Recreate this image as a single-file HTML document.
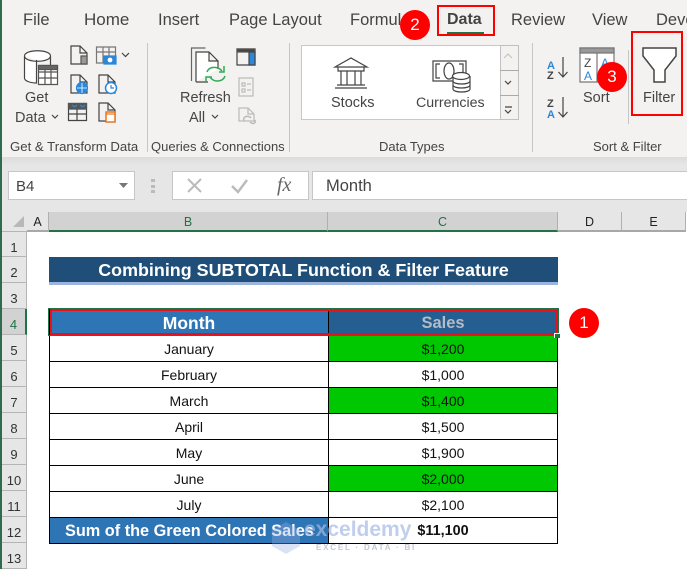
<!DOCTYPE html>
<html><head><meta charset="utf-8"><style>
html,body{margin:0;padding:0}
body{width:687px;height:569px;overflow:hidden;background:#fff;position:relative;font-family:"Liberation Sans",sans-serif}
div,span.a{position:absolute;box-sizing:border-box}
.t{white-space:nowrap;color:#444;font-size:14.5px;line-height:18px}
.tab{white-space:nowrap;color:#444;font-size:16.5px;line-height:20px;top:10px}
.g{white-space:nowrap;color:#444;font-size:13px;line-height:16px;top:139px;text-align:center}
.sep{background:#c6c6c6;width:1px;top:43px;height:109px}
.rh{left:2px;width:25px;height:26px;background:#e6e6e6;border-bottom:1px solid #b5b5b5;border-right:1px solid #b5b5b5;color:#333;font-size:13px;text-align:center;line-height:32px}
.ch{top:212px;height:20px;background:#e6e6e6;border-right:1px solid #b0b0b0;border-bottom:2px solid #a8a8a8;color:#222;font-size:12.5px;text-align:center;line-height:20px}
.c{height:27px;border:1px solid #000;text-align:center;font-size:14px;line-height:27px;color:#111;white-space:nowrap;overflow:hidden}
.b{left:49px;width:280px}.d{left:328px;width:230px}
.gr{background:#00c800}
.ball{width:30px;height:30px;border-radius:50%;background:#fe0000;color:#fff;font-size:17px;text-align:center;line-height:29px}
svg{position:absolute;left:0;top:0}
</style></head><body>
<div style="left:0;top:0;width:687px;height:157px;background:#f3f2f1"></div>
<div style="left:0;top:157px;width:687px;height:55px;background:#e6e6e6"></div>
<div style="left:0;top:157px;width:687px;height:8px;background:linear-gradient(#dcdcdc,#e6e6e6)"></div>

<div class="tab" style="left:23px">File</div>
<div class="tab" style="left:84px;font-size:17px">Home</div>
<div class="tab" style="left:158px">Insert</div>
<div class="tab" style="left:229px">Page Layout</div>
<div class="tab" style="left:350px">Formulas</div>
<div class="tab" style="left:447px;font-weight:bold;font-size:16px">Data</div>
<div style="left:447px;top:32px;width:37px;height:2px;background:#217346"></div>
<div class="tab" style="left:511px">Review</div>
<div class="tab" style="left:592px">View</div>
<div class="tab" style="left:656px;width:31px;overflow:hidden">Deve</div>
<div style="left:437px;top:5px;width:58px;height:31px;border:2px solid #f00"></div>

<div class="sep" style="left:147px"></div><div class="sep" style="left:289px"></div>
<div class="sep" style="left:532px"></div>
<div class="sep" style="left:628px;top:50px;height:74px"></div>

<div class="t" style="left:25px;top:89px">Get</div>
<div class="t" style="left:15px;top:109px">Data</div>
<div class="t" style="left:180px;top:89px">Refresh</div>
<div class="t" style="left:189px;top:109px">All</div>
<div class="g" style="left:10px;font-size:13.2px">Get &amp; Transform Data</div>
<div class="g" style="left:151px">Queries &amp; Connections</div>
<div class="g" style="left:379px">Data Types</div>
<div class="g" style="left:593px">Sort &amp; Filter</div>

<div style="left:301px;top:45px;width:218px;height:75px;background:#fff;border:1px solid #c8c8c8"></div>
<div style="left:500px;top:45px;width:19px;height:75px;background:#f3f2f1;border:1px solid #c0c0c0"></div>
<div style="left:500px;top:70px;width:19px;height:1px;background:#aaa"></div>
<div style="left:500px;top:95px;width:19px;height:1px;background:#aaa"></div>
<div class="t" style="left:331px;top:94px">Stocks</div>
<div class="t" style="left:416px;top:94px;font-size:14.2px">Currencies</div>
<div class="t" style="left:583px;top:89px">Sort</div>
<div class="t" style="left:643px;top:89px">Filter</div>

<div style="left:8px;top:171px;width:127px;height:29px;background:#fff;border:1px solid #c6c6c6;font-size:15px;color:#444;padding:6px 7px">B4</div>
<div style="left:172px;top:171px;width:137px;height:29px;background:#fff;border:1px solid #c6c6c6"></div>
<div style="left:312px;top:171px;width:375px;height:29px;background:#fff;border:1px solid #c6c6c6;border-right:0;font-size:16.5px;color:#444;padding:5px 13px">Month</div>
<div style="left:277px;top:174px;font:italic 20px 'Liberation Serif',serif;color:#666">fx</div>

<div class="ch" style="left:27px;width:22px">A</div>
<div class="ch" style="left:49px;width:279px;background:#d2d2d2;border-bottom-color:#217346;color:#217346">B</div>
<div class="ch" style="left:328px;width:230px;background:#d2d2d2;border-bottom-color:#217346;color:#217346">C</div>
<div class="ch" style="left:558px;width:64px">D</div>
<div class="ch" style="left:622px;width:64px">E</div>
<div style="left:2px;top:212px;width:25px;height:20px;background:#e6e6e6;border-bottom:1px solid #b5b5b5"></div>

<div class="rh" style="top:232px;height:25px">1</div>
<div class="rh" style="top:257px">2</div>
<div class="rh" style="top:283px">3</div>
<div class="rh" style="top:309px;background:#d2d2d2;color:#217346;border-right:2px solid #217346">4</div>
<div class="rh" style="top:335px">5</div>
<div class="rh" style="top:361px">6</div>
<div class="rh" style="top:387px">7</div>
<div class="rh" style="top:413px">8</div>
<div class="rh" style="top:439px">9</div>
<div class="rh" style="top:465px">10</div>
<div class="rh" style="top:491px">11</div>
<div class="rh" style="top:517px">12</div>
<div class="rh" style="top:543px">13</div>
<div style="left:0;top:0;width:2px;height:569px;background:#2f6b4f"></div>

<div style="left:49px;top:257px;width:509px;height:28px;background:#1f4e79;border-bottom:3px solid #9db4dc;color:#fff;font-weight:bold;font-size:17.9px;line-height:27px;text-align:center;white-space:nowrap">Combining SUBTOTAL Function &amp; Filter Feature</div>

<div class="c b" style="top:309px;background:#2e75b6;color:#fff;font-weight:bold;font-size:17.5px">Month</div>
<div class="c d" style="top:309px;background:#255e91;color:#b4bcc4;font-weight:bold;font-size:16.5px">Sales</div>
<div class="c b" style="top:335px">January</div><div class="c d gr" style="top:335px">$1,200</div>
<div class="c b" style="top:361px">February</div><div class="c d" style="top:361px">$1,000</div>
<div class="c b" style="top:387px">March</div><div class="c d gr" style="top:387px">$1,400</div>
<div class="c b" style="top:413px">April</div><div class="c d" style="top:413px">$1,500</div>
<div class="c b" style="top:439px">May</div><div class="c d" style="top:439px">$1,900</div>
<div class="c b" style="top:465px">June</div><div class="c d gr" style="top:465px">$2,000</div>
<div class="c b" style="top:491px">July</div><div class="c d" style="top:491px">$2,100</div>
<div class="c b" style="top:517px;background:#2e75b6;color:#fff;font-weight:bold;font-size:16.3px;text-align:left;padding-left:15px">Sum of the Green Colored Sales</div>
<div class="c d" style="top:517px;font-weight:bold;font-size:14.4px">$11,100</div>

<div style="left:48px;top:308px;width:511px;height:28px;border:1px solid #217346"></div>
<div style="left:50px;top:309px;width:508px;height:26px;border:2px solid #e8101c"></div>
<div style="left:554px;top:333px;width:6px;height:5px;background:#217346;border-left:1px solid #fff;border-top:1px solid #fff"></div>

<div style="left:304px;top:518px;font-size:21px;font-weight:bold;color:rgba(165,185,230,.7);white-space:nowrap">exceldemy</div>
<div style="left:316px;top:543px;font-size:8px;font-weight:bold;color:#c4c8d0;letter-spacing:1.8px;white-space:nowrap">EXCEL · DATA · BI</div>

<svg width="687" height="569" fill="none" stroke="#555" stroke-width="1.2">
 <!-- Get data -->
 <path d="M24.5 56V78c0 3 6 5 12 5V60M24.5 56c0-7 26-7 26 0 0 7-26 7-26 0zM50.5 56v10" stroke="#444" fill="#fff"/>
 <path d="M38.5 65.5h19v19h-19zM38.5 72h19M38.5 78h19M45 70v14M51 70v14" stroke="#555" fill="#fff"/>
 <path d="M38.5 65.5h19v4h-19z" fill="#666"/>
 <path d="M71 46h9l7 7v11H71zM80 46v7h7" stroke="#444"/><path d="M81 56h6v8h-6z" fill="#999"/>
 <path d="M96.5 47h19v16h-19zM96.5 52h19M103 47v16M109 47v16" stroke="#777"/><path d="M104 56h12v8h-12z" fill="#2b88d8" stroke="#2b88d8"/><circle cx="110" cy="60" r="2.4" fill="#fff" stroke="none"/>
 <path d="M122 53l3.500 3.500 3.500-3.500M52 115l3 3 3-3M212 115l3 3 3-3M505 81l3 3 3-3M505 107h7M505 110l3 3 3-3" stroke="#444"/>
 <path d="M504 58l4-4 4 4" stroke="#c4c4c4"/>
 <path d="M71 75h9l7 7v11H71zM80 75v7h7" stroke="#444"/><circle cx="82" cy="88" r="5.500" fill="#2b88d8" stroke="#2b88d8"/><path d="M77 88h10M82 83v10" stroke="#fff" stroke-width=".8"/>
 <path d="M99 75h9l7 7v11H99zM108 75v7h7" stroke="#444"/><circle cx="111" cy="88" r="5.500" fill="#fff" stroke="#2b88d8" stroke-width="1.500"/><path d="M111 85v3h3" stroke="#2b88d8"/>
 <path d="M68.500 103.500h18v17h-18zM68.500 114h18M68.500 109h18M77 109v11" stroke="#444"/><path d="M68.500 103.500h18v5h-18z" fill="#555"/><path d="M72 105l2.500 2 2.500-2M80 105l2.500 2 2.500-2" stroke="#2b88d8"/>
 <path d="M99 103h9l7 7v11H99zM108 103v7h7" stroke="#444"/><path d="M106 112h9v10h-9z" fill="#fff" stroke="#e8761e" stroke-width="1.500"/><path d="M106 114h9" stroke="#e8761e"/>
 <!-- Refresh -->
 <path d="M191.500 81V48h14" stroke="#666"/><path d="M196 82V52h13l9 9v8M209 52v9h9M196 82h12" stroke="#444" fill="#fff"/>
 <path d="M207 72c2-6 11-6 15-1M225 76c-2 6-11 7-15 1" stroke="#2faa55" stroke-width="1.500"/><path d="M224 66v6h-5M206 82v-5h6" stroke="#2faa55" stroke-width="1.500"/>
 <path d="M237 49h18v16h-18z" stroke="#444"/><path d="M237 49h18v3h-18z" fill="#444"/><path d="M249 52h6v13h-6z" fill="#2b88d8" stroke="#444"/>
 <path d="M239 78h14v18h-14z" stroke="#bbb"/><path d="M242 83h3v3h-3zM242 89h3v3h-3zM247 84h4M247 90h4" stroke="#bbb"/>
 <path d="M239 108h9l6 6v7h-15zM248 108v6h6" stroke="#bbb"/><path d="M244 121c-2-5 5-6 7-3M250 122c3 3 6 1 5-2" stroke="#bbb" stroke-width="1.500"/>
 <!-- Stocks / currencies -->
 <path d="M335 67l16-9 16 9zM338 67v4h26v-4M341 71v14M347 71v14M355 71v14M361 71v14M337 85h28M335 88h32" stroke="#444"/>
 <path d="M433 61h33v20h-33zM440 64h-4v14h4M459 64h4v14h-4" stroke="#444"/><ellipse cx="449" cy="71" rx="5" ry="8" stroke="#444"/>
 <path d="M453 76v13c0 4 17 4 17 0V76" fill="#fff" stroke="#444"/><ellipse cx="461" cy="76" rx="8.500" ry="3.500" fill="#fff" stroke="#444"/><path d="M453 81c0 4 17 4 17 0M453 85c0 4 17 4 17 0" stroke="#444"/>
 <!-- Sort -->
 <text x="547" y="69" font-family="Liberation Sans" font-size="11" font-weight="bold" fill="#2b88d8" stroke="none">A</text>
 <text x="547" y="79" font-family="Liberation Sans" font-size="11" font-weight="bold" fill="#444" stroke="none">Z</text>
 <path d="M563 57v20M558.500 72l4.500 5 4.500-5M563 97v20M558.500 112l4.500 5 4.500-5" stroke="#444"/>
 <text x="547" y="107" font-family="Liberation Sans" font-size="11" font-weight="bold" fill="#444" stroke="none">Z</text>
 <text x="547" y="118" font-family="Liberation Sans" font-size="11" font-weight="bold" fill="#2b88d8" stroke="none">A</text>
 <path d="M580 48h34v34h-34z" fill="#fff" stroke="#777"/><path d="M580 48h34v5h-34z" fill="#999" stroke="#777"/><path d="M597 53v29" stroke="#777"/>
 <text x="584" y="67" font-family="Liberation Sans" font-size="12" fill="#444" stroke="none">Z</text>
 <text x="584" y="80" font-family="Liberation Sans" font-size="12" fill="#2b88d8" stroke="none">A</text>
 <text x="601" y="67" font-family="Liberation Sans" font-size="12" fill="#2b88d8" stroke="none">A</text>
 <!-- Filter -->
 <path d="M643 48h33v8l-11 14v12h-11V70l-11-14z" fill="#fff" stroke="#444" stroke-width="1.500"/>
 <!-- formula bar -->
 <path d="M119 183h9l-4.500 5z" fill="#777" stroke="none"/>
 <path d="M151 179h4v3h-4zM151 185h4v3h-4zM151 190h4v3h-4z" fill="#bbb" stroke="none"/>
 <path d="M188 179l13 13M201 179l-13 13" stroke="#bbb" stroke-width="2"/><path d="M232 186l6 6 9-12" stroke="#bbb" stroke-width="2.500"/>
 <path d="M13 227l11-11v11z" fill="#b8b8b8" stroke="none"/>
 <path d="M272 530l14-8 14 8v16l-14 8-14-8z" fill="rgba(150,175,225,.35)" stroke="none"/>
 <path d="M632 32h50v83h-50z" stroke="#f00" stroke-width="2"/>
</svg>

<div class="ball" style="left:400px;top:10px">2</div>
<div class="ball" style="left:597px;top:62px">3</div>
<div class="ball" style="left:569px;top:308px">1</div>
</body></html>
